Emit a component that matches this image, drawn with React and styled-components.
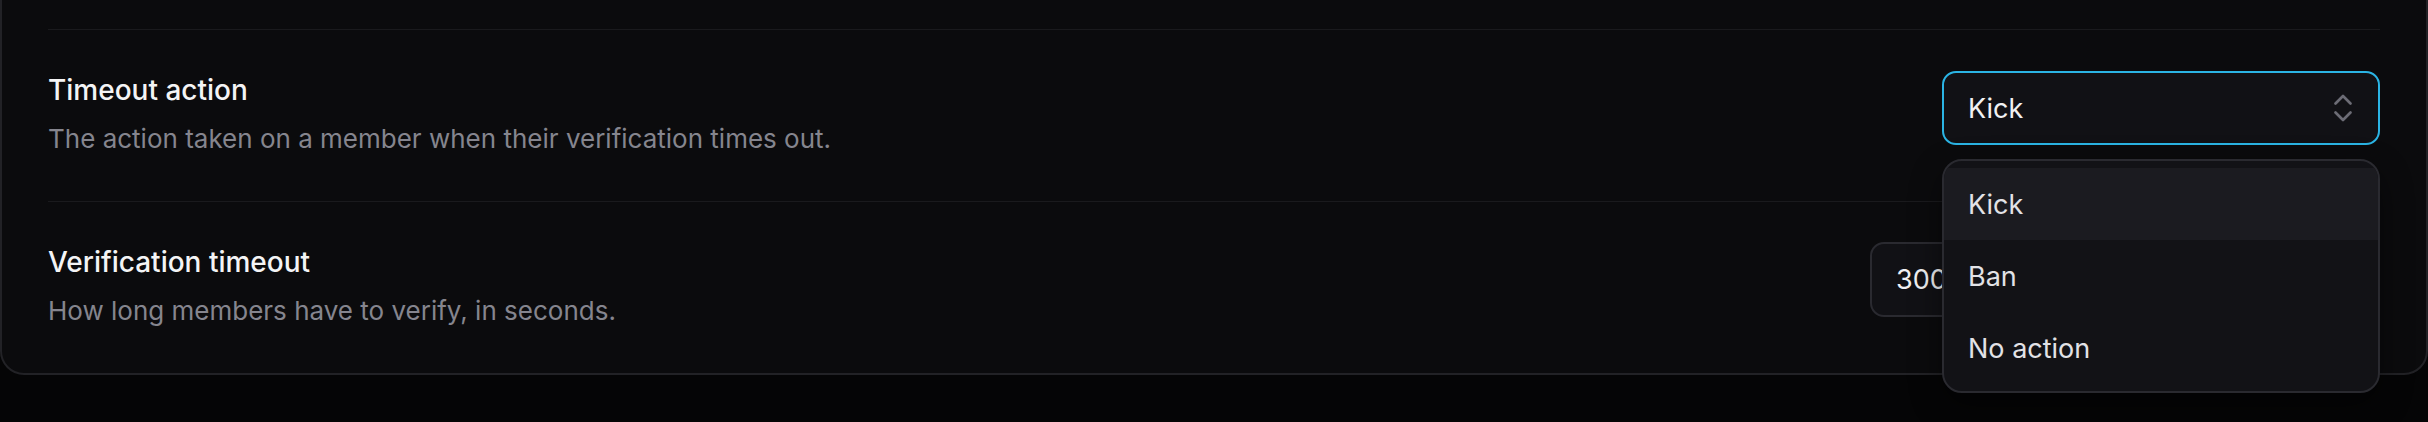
import React, { useState } from "react";
import styled, { createGlobalStyle } from "styled-components";
import { ChevronsUpDown } from "lucide-react";

const GlobalStyle = createGlobalStyle`
  html {
    overflow: hidden;
  }

  html, body {
    margin: 0;
    padding: 0;
    background-color: #050506;
  }

  body {
    min-height: 422px;
    font-family: Inter, "Noto Sans", sans-serif;
    -webkit-font-smoothing: antialiased;
  }
`;

const Card = styled.section`
  margin-top: -48px;
  padding: 75px 46px 0;
  background-color: #0b0b0d;
  border: 2px solid #222226;
  border-radius: 24px;
`;

const Row = styled.div`
  display: flex;
  justify-content: space-between;
  align-items: flex-start;
  gap: 48px;
  padding: 40px 0 42px;
  border-top: 1px solid #1a1a1d;
`;

const Info = styled.div`
  display: flex;
  flex-direction: column;
`;

const Title = styled.div`
  color: #f4f4f5;
  font-size: 28px;
  font-weight: 500;
  line-height: 40px;
`;

const Description = styled.div`
  margin-top: 9px;
  color: #85858e;
  font-size: 26px;
  line-height: 40px;
`;

const SelectWrap = styled.div`
  position: relative;
  width: 438px;
  margin-top: 1px;
`;

const SelectButton = styled.button`
  box-sizing: border-box;
  display: flex;
  align-items: center;
  justify-content: space-between;
  width: 100%;
  height: 74px;
  padding: 0 17px 0 24px;
  background-color: #111115;
  border: 2px solid ${(props) => (props.open ? "#2bb4e4" : "#2a2a30")};
  border-radius: 14px;
  color: #f1f1f3;
  font-family: inherit;
  font-size: 27px;
  cursor: pointer;

  svg {
    color: #6c6c75;
  }
`;

const Menu = styled.ul`
  position: absolute;
  top: calc(100% + 14px);
  left: 0;
  right: 0;
  z-index: 10;
  box-sizing: border-box;
  margin: 0;
  padding: 7px 0;
  list-style: none;
  background-color: #121216;
  border: 2px solid #2a2a30;
  border-radius: 20px;
  overflow: hidden;
  box-shadow: 0 12px 32px rgba(0, 0, 0, 0.45);
`;

const MenuItem = styled.li`
  display: flex;
  align-items: center;
  height: 72px;
  padding-left: 24px;
  background-color: ${(props) => (props.active ? "#1b1b20" : "transparent")};
  color: #e2e2e6;
  font-size: 27px;
  cursor: pointer;
`;

const NumberInput = styled.input`
  box-sizing: border-box;
  width: 510px;
  height: 75px;
  padding: 0 24px;
  background-color: #111115;
  border: 2px solid #2a2a30;
  border-radius: 14px;
  color: #f1f1f3;
  font-family: inherit;
  font-size: 27px;
  outline: none;
`;

const actions = ["Kick", "Ban", "No action"];

const TimeoutSelect = () => {
  const [value, setValue] = useState("Kick");
  const [open, setOpen] = useState(true);

  return (
    <SelectWrap>
      <SelectButton open={open} onClick={() => setOpen(!open)}>
        <span>{value}</span>
        <ChevronsUpDown size={36} strokeWidth={1.8} />
      </SelectButton>
      {open && (
        <Menu>
          {actions.map((action) => (
            <MenuItem
              key={action}
              active={action === "Kick"}
              onClick={() => {
                setValue(action);
                setOpen(false);
              }}
            >
              {action}
            </MenuItem>
          ))}
        </Menu>
      )}
    </SelectWrap>
  );
};

const App = () => {
  const [seconds, setSeconds] = useState("300");

  return (
    <>
      <GlobalStyle />
      <Card>
        <Row>
          <Info>
            <Title>Timeout action</Title>
            <Description>
              The action taken on a member when their verification times out.
            </Description>
          </Info>
          <TimeoutSelect />
        </Row>

        <Row>
          <Info>
            <Title>Verification timeout</Title>
            <Description>How long members have to verify, in seconds.</Description>
          </Info>
          <NumberInput
            type="text"
            inputMode="numeric"
            value={seconds}
            onChange={(e) => setSeconds(e.target.value)}
          />
        </Row>
      </Card>
    </>
  );
};

export default App;
